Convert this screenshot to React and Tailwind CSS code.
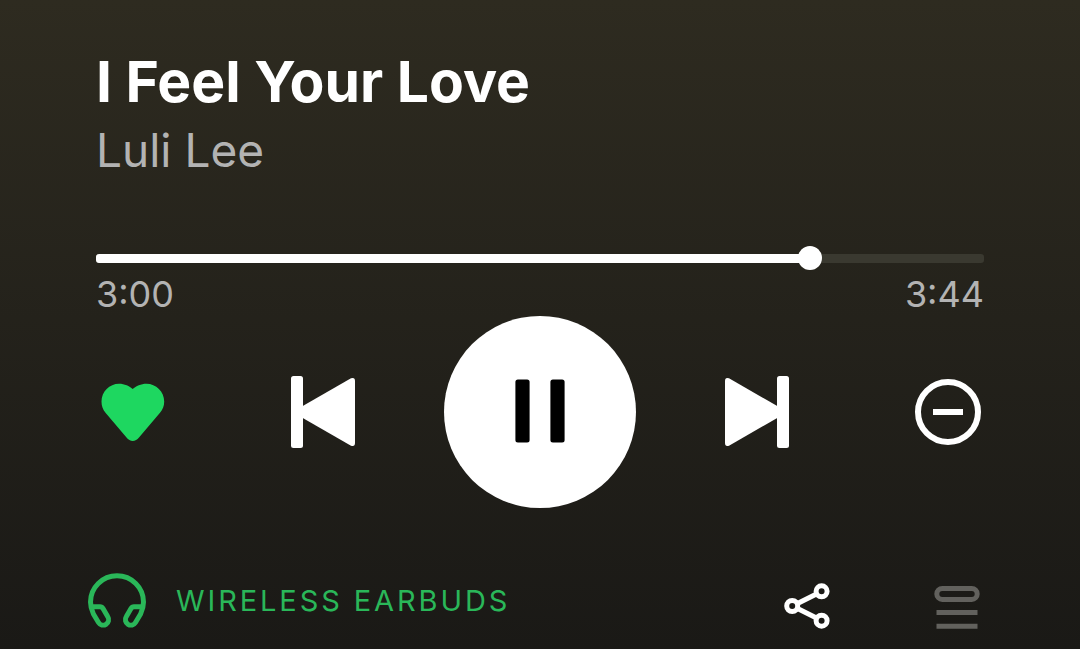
import React, { useState } from "react";

const DURATION = 224;

function formatTime(seconds) {
  const mins = Math.floor(seconds / 60);
  const secs = String(seconds % 60).padStart(2, "0");
  return `${mins}:${secs}`;
}

function HeartIcon() {
  return (
    <svg className="h-[72px] w-[72px]" viewBox="0 0 72 72" fill="currentColor">
      <path d="M36.7 13C40 10 45 7.700 50.500 7.700C60 7.700 68.200 15.500 68.200 25.500C68.200 30 66.800 33.500 64 36.800L43 61.600C39.500 66.100 34 66.100 30.500 61.600L9.500 36.800C6.800 33.500 5.500 30 5.500 25.500C5.500 15.500 13.500 7.700 23 7.700C28.500 7.700 33.500 10 36.700 13Z" />
    </svg>
  );
}

function PreviousIcon() {
  return (
    <svg className="h-[72px] w-16" viewBox="0 0 64 72" fill="currentColor">
      <rect width="12" height="72" rx="2.500" />
      <path d="M10 31L60 2.300Q64 1 64 5V67Q64 71 60 69.700L10 41Z" />
    </svg>
  );
}

function NextIcon() {
  return (
    <svg className="h-[72px] w-16" viewBox="0 0 64 72" fill="currentColor">
      <rect x="52" width="12" height="72" rx="2.500" />
      <path d="M54 31L4 2.300Q0 1 0 5V67Q0 71 4 69.700L54 41Z" />
    </svg>
  );
}

function PauseIcon() {
  return (
    <svg className="h-[66px] w-[50px]" viewBox="0 0 50 66" fill="currentColor">
      <rect x="0.400" y="0.400" width="14.200" height="63.200" rx="2.500" />
      <rect x="35.400" y="0.400" width="14.200" height="63.200" rx="2.500" />
    </svg>
  );
}

function PlayIcon() {
  return (
    <svg className="h-16 w-[50px]" viewBox="0 0 50 64" fill="currentColor">
      <path d="M2 2L50 32L2 62Z" />
    </svg>
  );
}

function HideIcon() {
  return (
    <svg className="h-[72px] w-[72px]" viewBox="0 0 72 72" fill="none" stroke="currentColor" strokeWidth="6">
      <circle cx="36" cy="36" r="30" />
      <path d="M21 36H51" />
    </svg>
  );
}

function HeadphonesIcon() {
  return (
    <svg
      className="h-14 w-[58px]"
      viewBox="0 0 58 56"
      fill="none"
      stroke="currentColor"
      strokeWidth="5"
      strokeLinejoin="round"
    >
      <path d="M3.500 33.700H12Q14 33.700 15 35.500L19.800 43.800A5.400 5.400 0 0 1 10.500 49.500L5.400 41C3.500 37 2.500 33 2.500 29A26.500 26.300 0 0 1 55.500 29C55.500 33 54.500 37 52.600 41L47.500 49.500A5.400 5.400 0 0 1 38.200 43.800L43 35.500Q44 33.700 46 33.700H54.500" />
    </svg>
  );
}

function ShareIcon() {
  return (
    <svg className="h-[46px] w-[46px]" viewBox="0 0 46 46" fill="none" stroke="currentColor" strokeWidth="5">
      <circle cx="8.200" cy="23" r="5.500" />
      <circle cx="37.600" cy="8.300" r="5.500" />
      <circle cx="37.600" cy="37.700" r="5.500" />
      <path d="M13 20.800L33 10.800M13 25.200L33 35.200" />
    </svg>
  );
}

function QueueIcon() {
  return (
    <svg className="h-[46px] w-[46px]" viewBox="0 0 46 46" fill="none" stroke="currentColor" strokeWidth="5">
      <rect x="2.800" y="5.400" width="40.400" height="11" rx="5.500" />
      <path d="M2.500 29.600H43.500M2.500 43.300H43.500" />
    </svg>
  );
}

export default function App() {
  const [position, setPosition] = useState(180);
  const [playing, setPlaying] = useState(true);
  const [liked, setLiked] = useState(true);

  return (
    <main className="flex min-h-screen flex-col bg-linear-to-b from-[#2e2b20] to-[#1a1916] pt-[50px] font-['Inter',sans-serif] text-white">
      {/* Track info */}
      <div className="px-24">
        <h1 className="text-[57px] leading-16 font-bold">I Feel Your Love</h1>
        <p className="mt-2 text-[46px] leading-14 text-[#b3b3b3]">Luli Lee</p>
      </div>

      {/* Progress */}
      <div className="mt-[68px] px-24">
        <div className="relative flex h-6 items-center">
          <div className="h-[9px] w-full overflow-hidden rounded-[3px] bg-[#3a3930]">
            <div className="h-full bg-white" style={{ width: `${(position / DURATION) * 100}%` }} />
          </div>
          <input
            type="range"
            aria-label="Track position"
            min={0}
            max={DURATION}
            value={position}
            onChange={(e) => setPosition(Number(e.target.value))}
            className="absolute inset-y-0 -left-3 h-6 w-[calc(100%+24px)] cursor-pointer appearance-none bg-transparent [&::-webkit-slider-thumb]:h-6 [&::-webkit-slider-thumb]:w-6 [&::-webkit-slider-thumb]:appearance-none [&::-webkit-slider-thumb]:rounded-full [&::-webkit-slider-thumb]:bg-white"
          />
        </div>
        <div className="mt-1 flex justify-between text-4xl leading-10 text-[#b3b3b3]">
          <span>{formatTime(position)}</span>
          <span>{formatTime(DURATION)}</span>
        </div>
      </div>

      {/* Controls */}
      <div className="mt-0.5 flex items-center justify-between px-24">
        <button
          aria-label="Like"
          aria-pressed={liked}
          onClick={() => setLiked(!liked)}
          className={liked ? "text-[#1ed760]" : "text-white"}
        >
          <HeartIcon />
        </button>
        <div className="flex items-center gap-[89px]">
          <button aria-label="Previous" onClick={() => setPosition(0)}>
            <PreviousIcon />
          </button>
          <button
            aria-label={playing ? "Pause" : "Play"}
            onClick={() => setPlaying(!playing)}
            className="flex h-48 w-48 items-center justify-center rounded-full bg-white text-black"
          >
            {playing ? <PauseIcon /> : <PlayIcon />}
          </button>
          <button aria-label="Next" onClick={() => setPosition(DURATION)}>
            <NextIcon />
          </button>
        </div>
        <button aria-label="Hide song">
          <HideIcon />
        </button>
      </div>

      {/* Device, share and queue */}
      <div className="mt-[65px] flex items-end justify-between pr-[100px] pl-[88px]">
        <button className="flex items-center gap-[30px] text-[#2ab759]">
          <HeadphonesIcon />
          <span className="text-[29px] tracking-widest">WIRELESS EARBUDS</span>
        </button>
        <div className="flex gap-[104px]">
          <button aria-label="Share">
            <ShareIcon />
          </button>
          <button aria-label="Queue" className="text-[#62615d]">
            <QueueIcon />
          </button>
        </div>
      </div>
    </main>
  );
}
